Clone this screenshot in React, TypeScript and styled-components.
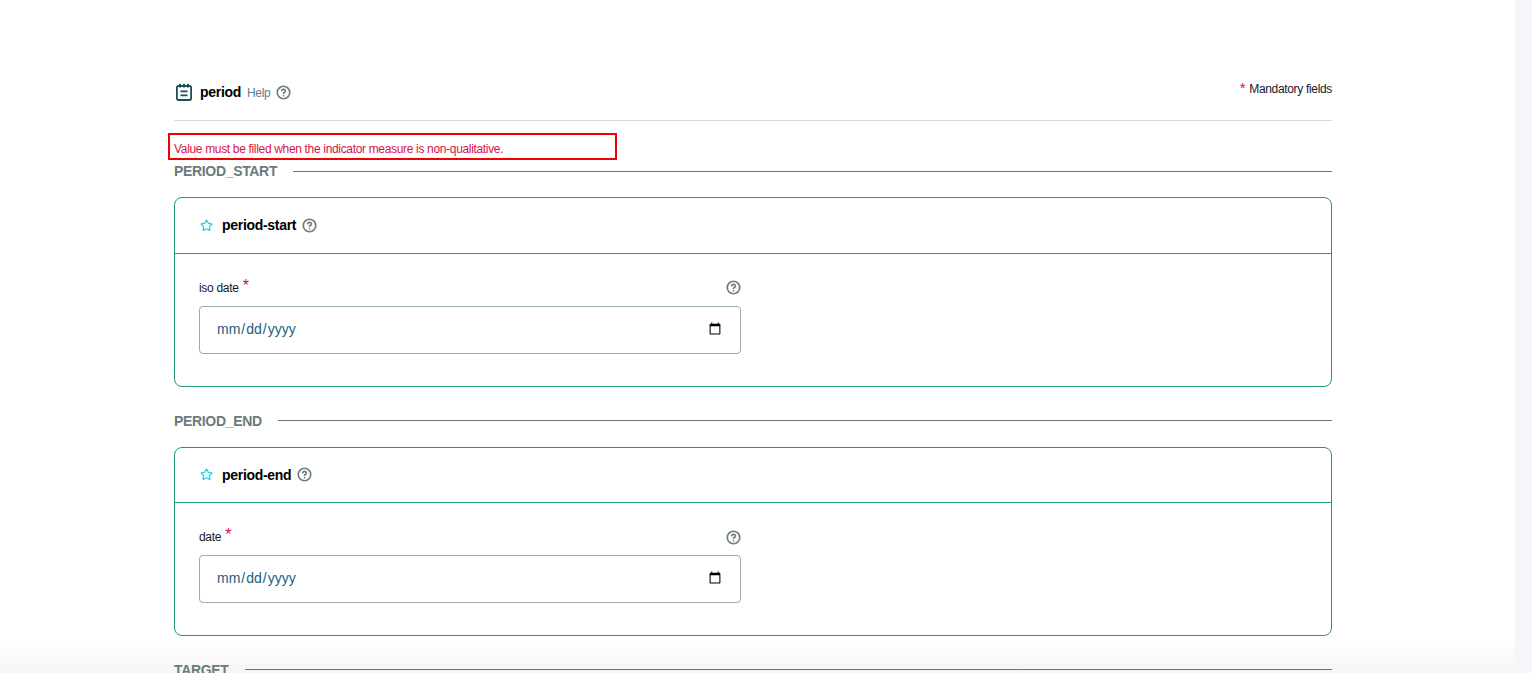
import React from 'react'
import styled, { createGlobalStyle } from 'styled-components'
import { CircleHelp, Star } from 'lucide-react'

const GlobalStyle = createGlobalStyle`
  html, body {
    margin: 0;
    height: 100%;
    overflow: hidden;
    background: #fff;
    font-family: "Liberation Sans", Arial, sans-serif;
  }
`

const Shell = styled.div`
  display: flex;
  height: 673px;
  overflow: hidden;
  background: linear-gradient(to bottom, #fff 639px, #f5f5f5 673px);
`

const Main = styled.main`
  width: 1158px;
  padding: 0 183px 0 174px;
  flex: none;
`

const Rail = styled.div`
  width: 17px;
  margin-left: auto;
  background: #f5f6fb;
`

const Header = styled.header`
  display: flex;
  justify-content: space-between;
  height: 120px;
  border-bottom: 1px solid #d5dcdc;
  box-sizing: content-box;
`

const HeaderLeft = styled.div`
  display: flex;
  align-items: center;
  height: 24px;
  margin-top: 80px;
  margin-left: 1px;
`

const Title = styled.span`
  margin-left: 7px;
  font-size: 14px;
  font-weight: 700;
  letter-spacing: -0.3px;
  color: #000;
`

const HelpLink = styled.span`
  margin: 1px 6px 0 6px;
  font-size: 12px;
  letter-spacing: -0.3px;
  color: #607d8b;
`

const Mandatory = styled.div`
  margin-top: 79px;
  font-size: 12px;
  letter-spacing: -0.33px;
  line-height: 17px;
  color: #14192a;
`

const Required = styled.span`
  color: #d0103a;
  font-size: 15px;
  margin-right: 4px;
`

const ErrorBox = styled.div`
  width: 441px;
  height: 23px;
  margin: 12px 0 0 -6px;
  padding-left: 4px;
  border: 2px solid #f00000;
  font-size: 12px;
  line-height: 29px;
  letter-spacing: -0.33px;
  color: #d6114a;
`

const SectionTitle = styled.div<{ $gap: number }>`
  display: flex;
  align-items: center;
  gap: 16px;
  height: 17px;
  margin-top: ${p => p.$gap}px;
  font-size: 14px;
  font-weight: 700;
  letter-spacing: -0.33px;
  color: #6c7a7d;

  &::after {
    content: '';
    flex: 1;
    height: 1px;
    background: #66757a;
  }
`

const Card = styled.section`
  box-sizing: border-box;
  height: 189.6px;
  margin-top: 17.5px;
  border: 1px solid #1f957a;
  border-radius: 8px;
  background: #fff;
`

const CardHeader = styled.div`
  box-sizing: border-box;
  display: flex;
  align-items: center;
  height: 55.6px;
  padding-left: 25px;
  border-bottom: 1px solid #1f957a;
`

const CardTitle = styled.span`
  margin: 0 6px 0 9px;
  font-size: 14px;
  font-weight: 700;
  letter-spacing: -0.3px;
  color: #000;
`

const Field = styled.div`
  width: 542px;
  padding: 25px 0 0 24px;
`

const FieldLabelRow = styled.div`
  display: flex;
  align-items: center;
  justify-content: space-between;
  height: 18px;
`

const FieldLabel = styled.label`
  margin-top: -4px;
  font-size: 12px;
  letter-spacing: -0.3px;
  color: #14192a;
`

const FieldStar = styled.span`
  margin-left: 4px;
  font-size: 16px;
  vertical-align: 1px;
  color: #d0103a;
`

const DateInput = styled.input`
  display: block;
  box-sizing: border-box;
  width: 542px;
  height: 48px;
  margin-top: 9px;
  padding: 0 16px 2px;
  border: 1px solid #9aabae;
  border-radius: 4px;
  background: #fff;
  outline: none;
  font-family: "Liberation Sans", Arial, sans-serif;
  font-size: 14px;
  color: #1c6080;
`

const NotepadIcon = () => (
  <svg width="18" height="18" viewBox="0 0 18 18" fill="none" stroke="#17505f" strokeWidth="1.8">
    <rect x="1.9" y="3" width="14.2" height="14" rx="1.6" />
    <path d="M5 .8v3.6M9 .8v3.6M13 .8v3.6M5.5 8.4h7M5.5 12.4h7" />
  </svg>
)

const Help = () => <CircleHelp size={15} color="#6f7d7d" strokeWidth={2.7} />

const periods = [
  { section: 'PERIOD_START', card: 'period-start', label: 'iso date', gap: 2.5 },
  { section: 'PERIOD_END', card: 'period-end', label: 'date', gap: 25.5 }
]

export default function App() {
  return (
    <>
      <GlobalStyle />
      <Shell>
        <Main>
          <Header>
            <HeaderLeft>
              <NotepadIcon />
              <Title>period</Title>
              <HelpLink>Help</HelpLink>
              <Help />
            </HeaderLeft>
            <Mandatory>
              <Required>*</Required>Mandatory fields
            </Mandatory>
          </Header>
          <ErrorBox>Value must be filled when the indicator measure is non-qualitative.</ErrorBox>
          {periods.map(p => (
            <React.Fragment key={p.card}>
              <SectionTitle $gap={p.gap}>{p.section}</SectionTitle>
              <Card>
                <CardHeader>
                  <Star size={13} color="#17d4e0" strokeWidth={2.2} />
                  <CardTitle>{p.card}</CardTitle>
                  <Help />
                </CardHeader>
                <Field>
                  <FieldLabelRow>
                    <FieldLabel>
                      {p.label}
                      <FieldStar>*</FieldStar>
                    </FieldLabel>
                    <Help />
                  </FieldLabelRow>
                  <DateInput type="date" />
                </Field>
              </Card>
            </React.Fragment>
          ))}
          <SectionTitle $gap={25}>TARGET</SectionTitle>
        </Main>
        <Rail />
      </Shell>
    </>
  )
}
